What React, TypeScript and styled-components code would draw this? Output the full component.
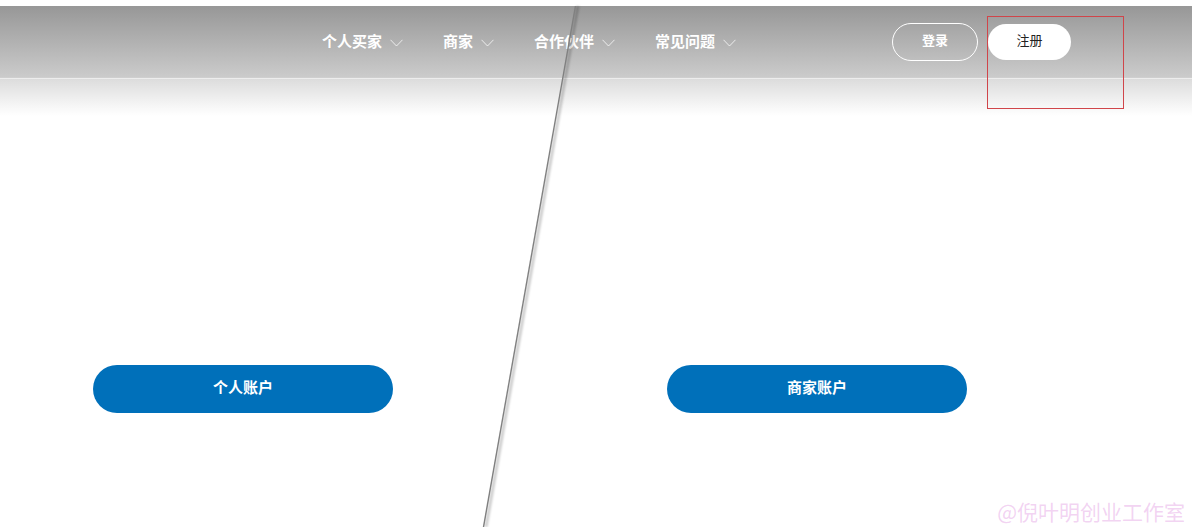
import React from "react";
import styled, { createGlobalStyle } from "styled-components";

const Global = createGlobalStyle`
  html, body { margin: 0; padding: 0; background: #fff; }
  body { font-family: "Noto Sans CJK SC", "Noto Sans", sans-serif; }
  * { box-sizing: border-box; }
`;

const Page = styled.div`
  position: relative;
  width: 1192px;
  height: 527px;
  overflow: hidden;
  background: #fff;
  padding-top: 6px;
`;

const Hero = styled.div`
  background: linear-gradient(
    to bottom,
    #979797 0px,
    #cbcbcb 71px,
    #dcdcdc 73px,
    #f6f6f6 100px,
    #ffffff 110px
  );
  height: 521px;
  display: flex;
  flex-direction: column;
`;

const Header = styled.header`
  height: 73px;
  display: flex;
  align-items: center;
  padding: 0 121px 0 322px;
  border-bottom: 1px solid rgba(255, 255, 255, 0.55);
`;

const Nav = styled.nav`
  display: flex;
  align-items: center;
  gap: 40px;
  margin-top: -3px;
`;

const NavItem = styled.div`
  display: flex;
  align-items: center;
  gap: 8px;
  color: #fff;
  font-size: 15px;
  font-weight: 700;
  line-height: 20px;
  white-space: nowrap;
`;

const Chevron = styled.svg`
  width: 13px;
  height: 8px;
  margin-top: 4px;
`;

const Actions = styled.div`
  margin-left: auto;
  display: flex;
  align-items: center;
  gap: 10px;
  margin-top: -1px;
`;

const PillButton = styled.button<{ $filled?: boolean }>`
  height: ${(p) => (p.$filled ? "36px" : "38px")};
  width: ${(p) => (p.$filled ? "83px" : "86px")};
  border-radius: 19px;
  border: ${(p) => (p.$filled ? "none" : "1.5px solid #fff")};
  background: ${(p) => (p.$filled ? "#fff" : "transparent")};
  color: ${(p) => (p.$filled ? "#222" : "#fff")};
  font-family: inherit;
  font-size: 13px;
  font-weight: ${(p) => (p.$filled ? 400 : 700)};
  line-height: 16px;
  display: flex;
  align-items: center;
  justify-content: center;
  padding: 0 0 4px;
  margin-top: ${(p) => (p.$filled ? "1px" : "0")};
`;

const Accounts = styled.main`
  flex: 1;
  display: grid;
  grid-template-columns: 596px 596px;
  padding-top: 286px;
`;

const AccountCell = styled.div<{ $offset: number }>`
  padding-left: ${(p) => p.$offset}px;
`;

const AccountButton = styled.button`
  width: 300px;
  height: 48px;
  border-radius: 24px;
  border: none;
  background: #0070ba;
  color: #fff;
  font-family: inherit;
  font-size: 15px;
  font-weight: 700;
  line-height: 18px;
  display: flex;
  align-items: center;
  justify-content: center;
  padding: 0 0 4px;
`;

const DividerSvg = styled.svg`
  position: absolute;
  left: 0;
  top: 0;
  width: 1192px;
  height: 527px;
  pointer-events: none;
`;

const Annotation = styled.div`
  position: absolute;
  left: 987px;
  top: 16px;
  width: 137px;
  height: 93px;
  border: 1px solid #d0454a;
  pointer-events: none;
`;

const Watermark = styled.div`
  position: absolute;
  right: 7px;
  bottom: 4px;
  font-size: 21px;
  line-height: 24px;
  color: rgba(225, 150, 225, 0.42);
  white-space: nowrap;
  pointer-events: none;
`;

const ChevronIcon = () => (
  <Chevron viewBox="0 0 13 8">
    <path d="M0.5 0.8 L6.5 7 L12.5 0.8" fill="none" stroke="rgba(255,255,255,0.75)" strokeWidth="1" />
  </Chevron>
);

const navItems = ["个人买家", "商家", "合作伙伴", "常见问题"];

export default function App() {
  return (
    <Page>
      <Global />
      <Hero>
        <Header>
          <Nav>
            {navItems.map((t) => (
              <NavItem key={t}>
                {t}
                <ChevronIcon />
              </NavItem>
            ))}
          </Nav>
          <Actions>
            <PillButton>登录</PillButton>
            <PillButton $filled>注册</PillButton>
          </Actions>
        </Header>
        <Accounts>
          <AccountCell $offset={93}>
            <AccountButton>个人账户</AccountButton>
          </AccountCell>
          <AccountCell $offset={71}>
            <AccountButton>商家账户</AccountButton>
          </AccountCell>
        </Accounts>
      </Hero>
      <DividerSvg viewBox="0 0 1192 527">
        <defs>
          <filter id="blur" x="-20%" y="-5%" width="140%" height="110%">
            <feGaussianBlur stdDeviation="1.2" />
          </filter>
        </defs>
        <line x1="578" y1="6" x2="486" y2="527" stroke="rgba(0,0,0,0.2)" strokeWidth="3" filter="url(#blur)" />
        <line x1="575.5" y1="6" x2="483.5" y2="527" stroke="#808080" strokeWidth="1.4" />
      </DividerSvg>
      <Annotation />
      <Watermark>@倪叶明创业工作室</Watermark>
    </Page>
  );
}
